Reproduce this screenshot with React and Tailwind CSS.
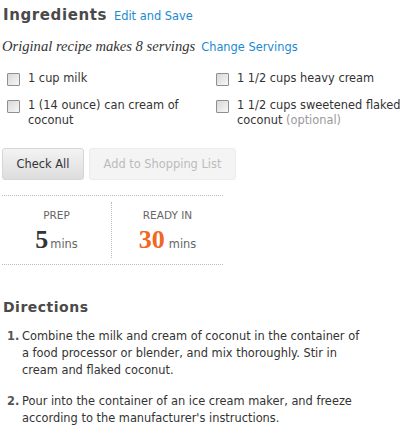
import React from 'react';

const sans = { fontFamily: '"DejaVu Sans", Verdana, sans-serif' };
const serif = { fontFamily: '"Liberation Serif", Georgia, serif' };

const ingredients = [
  { text: '1 cup milk' },
  { text: '1 1/2 cups heavy cream' },
  { text: '1 (14 ounce) can cream of coconut' },
  { text: '1 1/2 cups sweetened flaked coconut', note: '(optional)' },
];

const steps = [
  'Combine the milk and cream of coconut in the container of a food processor or blender, and mix thoroughly. Stir in cream and flaked coconut.',
  "Pour into the container of an ice cream maker, and freeze according to the manufacturer's instructions.",
];

const Checkbox = () => (
  <span className="mt-[2px] w-[13px] h-[13px] shrink-0 border border-[#8f8f8f] bg-gradient-to-br from-[#d8d8d8] to-[#f7f7f7] rounded-[1px]" />
);

export default function App() {
  return (
    <div className="w-[420px] h-[433px] bg-white text-[#333] overflow-hidden" style={sans}>
      <div className="flex items-baseline pl-[3px] pt-[5px]">
        <h2 className="text-[15px] font-bold tracking-[0.6px] text-[#4a4a4a] leading-[20px]">Ingredients</h2>
        <a className="ml-[7px] text-[11.4px] text-[#1a8ad0]">Edit and Save</a>
      </div>

      <div className="flex items-baseline pl-[2px] mt-[11px] leading-[20px]">
        <span className="text-[14.6px] italic text-[#333]" style={serif}>
          Original recipe makes 8 servings
        </span>
        <a className="ml-[6px] text-[11.4px] text-[#1a8ad0]">Change Servings</a>
      </div>

      <div className="grid grid-cols-[209px_1fr] gap-y-[12px] pl-[7px] mt-[14px] text-[11.4px] leading-[15px]">
        {ingredients.map((item, i) => (
          <div key={i} className="flex gap-[8px] pr-[12px]">
            <Checkbox />
            <p>
              {item.text}
              {item.note ? ' ' : ''}
              {item.note && <span className="text-[#999]">{item.note}</span>}
            </p>
          </div>
        ))}
      </div>

      <div className="flex gap-[5px] pl-[2px] mt-[20px]">
        <button className="w-[82px] h-[32px] rounded-[3px] bg-gradient-to-b from-[#f3f3f3] to-[#dddddd] border border-[#d6d6d6] text-[11.4px] text-[#333]">
          Check All
        </button>
        <button className="w-[147px] h-[32px] rounded-[3px] bg-[#f4f4f4] border border-[#ececec] text-[11.4px] text-[#bbb]">
          Add to Shopping List
        </button>
      </div>

      <div className="ml-[2px] mt-[15px] w-[221px] border-y border-dotted border-[#bbb] py-[6px] flex">
        <div className="w-[110px] flex flex-col items-center pt-[6px] border-r border-dotted border-[#bbb] h-[56px]">
          <span className="text-[10.5px] text-[#666] leading-[14px]">PREP</span>
          <div className="flex items-baseline mt-[6px] leading-[24px]">
            <span className="text-[26px] font-bold text-[#333]" style={serif}>5</span>
            <span className="text-[11.4px] text-[#666] ml-[2px]">mins</span>
          </div>
        </div>
        <div className="flex-1 flex flex-col items-center pt-[6px]">
          <span className="text-[10.5px] text-[#666] leading-[14px]">READY IN</span>
          <div className="flex items-baseline mt-[6px] leading-[24px]">
            <span className="text-[26px] font-bold text-[#f26522]" style={serif}>30</span>
            <span className="text-[11.4px] text-[#666] ml-[4px]">mins</span>
          </div>
        </div>
      </div>

      <h2 className="pl-[3px] mt-[33px] text-[14px] font-bold tracking-[0.5px] text-[#4a4a4a] leading-[18px]">Directions</h2>

      <ol className="mt-[12px] pl-[7px] text-[11.4px] leading-[17px] flex flex-col gap-[14px]">
        {steps.map((s, i) => (
          <li key={i} className="flex">
            <span className="w-[15px] shrink-0 font-bold text-[#555]">{i + 1}.</span>
            <span className="w-[345px]">{s}</span>
          </li>
        ))}
      </ol>
    </div>
  );
}
